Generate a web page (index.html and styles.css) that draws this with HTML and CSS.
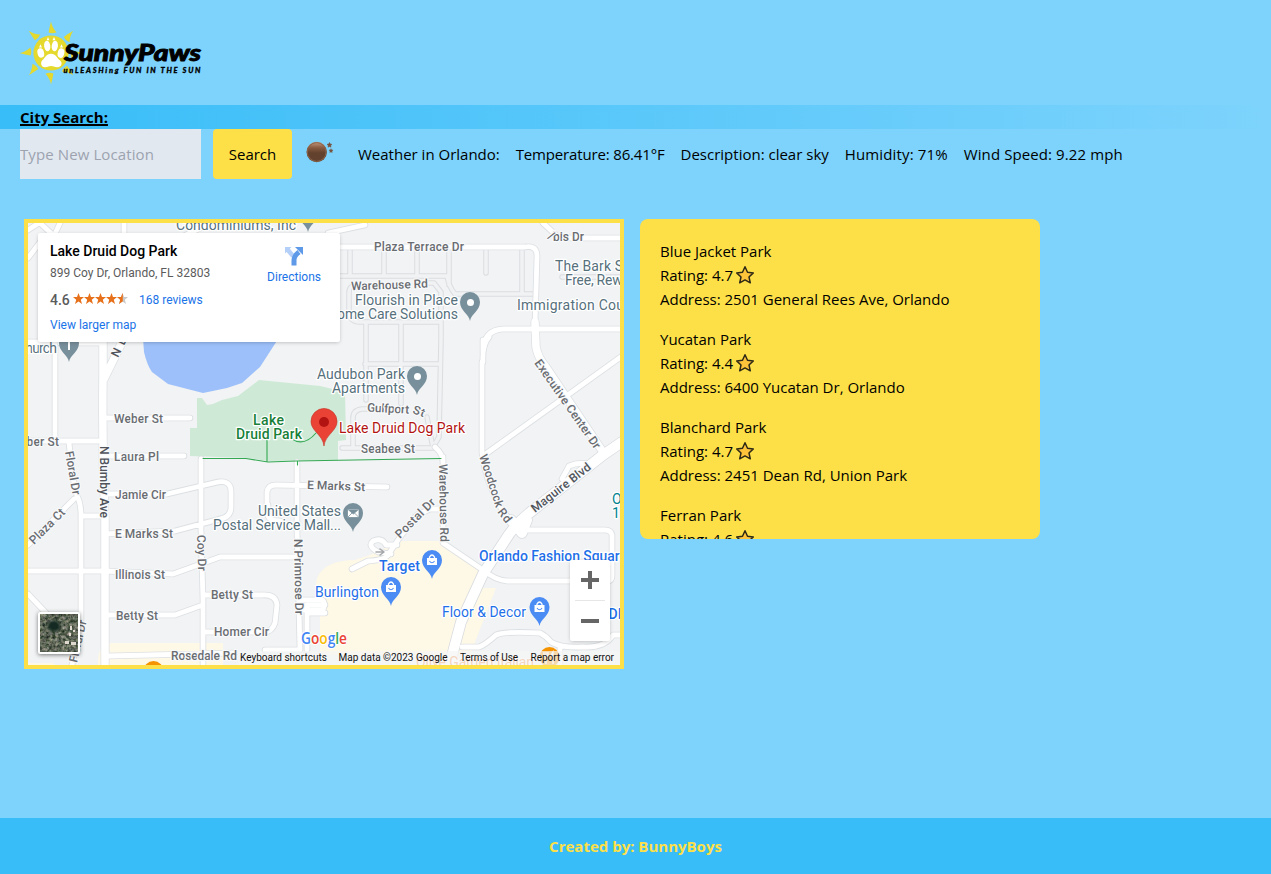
FILE: index.html
```html
<!DOCTYPE html>
<html lang="en">
<head>
<meta charset="utf-8">
<title>SunnyPaws</title>
<link rel="stylesheet" href="styles.css">
</head>
<body>
<header class="header">
  <svg class="logo" viewBox="20 20 190 65" role="img" aria-label="SunnyPaws">
    <g fill="#e4d92c">
      <circle cx="51" cy="53" r="17.6"/>
      <path id="ray" d="M51 21.500Q52 27.500 56.500 32.300Q52.500 34 48.600 32.600Q49.500 27 51 21.500z"/>
      <use href="#ray" transform="rotate(45 51 53)"/>
      <use href="#ray" transform="rotate(90 51 53)"/>
      <use href="#ray" transform="rotate(135 51 53)"/>
      <use href="#ray" transform="rotate(180 51 53)"/>
      <use href="#ray" transform="rotate(225 51 53)"/>
      <use href="#ray" transform="rotate(270 51 53)"/>
      <use href="#ray" transform="rotate(315 51 53)"/>
    </g>
    <g fill="#fff">
      <path d="M51 53.700C46 53.700 45 58 42.500 60C40 62 41 67.500 45 67.300C48 67 49 66 51 66C53 66 54.500 67.200 57.500 67.300C62 67 63 62 59.500 60C57 58 56 53.700 51 53.700z"/>
      <ellipse cx="47.200" cy="46" rx="3.100" ry="5.300" transform="rotate(-6 47 46)"/>
      <ellipse cx="54.800" cy="46" rx="3.100" ry="5.300" transform="rotate(6 55 46)"/>
      <ellipse cx="40.800" cy="53" rx="3.300" ry="4.800" transform="rotate(-14 40.500 53)"/>
      <ellipse cx="61" cy="53" rx="3.300" ry="4.800" transform="rotate(14 60.500 53)"/>
      <path d="M48 37l1.400 3.300h-2.800zM54 37l1.500 3.300h-3zM40.500 44.300l1.500 3.300h-3zM61.500 44.300l1.500 3.300h-3z"/>
    </g>
    <text class="logo-name" x="64" y="61" textLength="137" lengthAdjust="spacingAndGlyphs">SunnyPaws</text>
    <text class="logo-tag" x="63.500" y="73" textLength="137">unLEASHing FUN IN THE SUN</text>
  </svg>
</header>

<div class="search-title"><span>City Search:</span></div>
<section class="search-row">
  <input class="search-input" type="text" placeholder="Type New Location">
  <button class="search-button" type="button">Search</button>
  <svg class="weather-icon" viewBox="0 0 50 50">
    <defs><linearGradient id="dusk" x1="0" y1="0" x2="0" y2="1"><stop offset="0" stop-color="#c49a80"/><stop offset=".3" stop-color="#875a40"/><stop offset=".55" stop-color="#62412d"/><stop offset="1" stop-color="#634430"/></linearGradient></defs>
    <circle cx="21.700" cy="23" r="10.200" fill="url(#dusk)"/>
    <circle cx="21.700" cy="23" r="9.400" fill="none" stroke="#8d634a" stroke-width="1"/>
    <path d="M34.500 13.500l.8 1.600 1.700.2-1.300 1.200.3 1.700-1.500-.8-1.500.8.3-1.700-1.300-1.200 1.700-.2zM36 19.700l.6 1.200 1.400.2-1 1 .2 1.300-1.200-.6-1.200.6.2-1.300-1-1 1.400-.2z" fill="#76523e" stroke="#76523e" stroke-width=".5"/>
  </svg>
  <div class="weather">
    <p>Weather in Orlando:</p><p class="temperature">Temperature: 86.41°F</p><p>Description: clear sky</p><p class="humidity">Humidity: 71%</p><p class="wind">Wind Speed: 9.22 mph</p>
  </div>
</section>

<main class="content">
  <section class="map">
    <svg class="map-canvas" viewBox="28 223 592 442">
      <defs>
        <g id="lanes">
          <path d="M330 276H447Q449 287 455 294H532M350 248V276M384 248V276M417 248V276M449 248V285M486 250V273M522 250V293M363 287Q349 282 349 293V312Q350 322 360 322H441M425 283H434L441 292V340L439 437L433 447M366 322V400M401 322V404M365 364H440M342 448H433L427 417M353 448V418Q353 410 362 409H369M562 277H620"/>
        </g>
        <g id="streets">
          <path d="M55 342V441M60 343H103M28 441H103M105 418H190M105 456H184M69 443L73 478L77 496Q81 503 81 516V620L72 665M28 545L74 499M82 516H104M105 494H167L218 482Q231 480 231 492V507Q231 517 220 519L175 531L105 534M201 459L201 530L203 600V665M28 571H105L173 574L220 557H297M203 595H262Q276 594 277 605L275 623Q272 632 264 632H203M106 615H175L200 606M28 594L48 615M108 656L235 653M267 509V492Q268 485 276 485L387 487M268 505V516Q270 521 280 521M297 466V530L300 650M300 650H265M307 650V605H325M310 613H325M297 462V480M28 230L39 223M40 223L54 236L60 223M28 258L44 237M124 223V240M182 237L210 223M28 342H50"/>
          <path d="M310 247H525Q537 245 537 256L535 325M543 223L557 236Q560 238 568 238H620M483 340V353Q483 330 503 329H620M482 362V400V453Q485 480 502 510L514 525M483 362Q482 345 489 337M487 453L622 356M562 479L569 466Q580 461 592 465M443 457L443 543L483 570Q495 580 507 581H608Q612 581 612 575V535Q611 530 605 530H522M435 447Q443 454 443 462M352 569L368 561Q388 560 390 552L400 537L417 515L430 509L440 509M391 554L378 552Q367 546 373 541Q382 537 386 545L397 545M462 647H479Q485 645 496 635Q504 631 540 633Q546 636 551 642Q560 648 583 647Q605 648 613 635H620M560 647V665M302 600H322Q326 602 323 610H302M328 233L365 225"/>
        </g>
        <g id="avenues">
          <path d="M103 342V375Q102 450 105 520V665M104 379L133 320M535 322L536 347Q538 358 546 367L603 452"/>
        </g>
        <g id="highway"><path d="M622 442L603 455L537 507Q515 523 504 542L483 574L461 622L449 667M511 520L522 533L527 520"/></g>
        <g id="pin"><path d="M0 18C-1 11-10 8-10-1A10 10 0 0 1 10-1C10 8 1 11 0 18z"/></g>
        <g id="bag"><path d="M-5-3H5V4H-5z" fill="#fff"/><path d="M-2.500-3V-4Q0-8 2.500-4V-3" fill="none" stroke="#fff" stroke-width="1.300"/><path d="M-2.500 0Q0 3.500 2.500 0" fill="none" stroke="#4b8bf4" stroke-width="1.100"/></g>
      </defs>
      <rect x="28" y="223" width="592" height="442" fill="#f1f3f4"/>
      <path fill="#9dc0fa" d="M143 338L144 352Q147 365 152 372L168 384L203 393L227 388L242 383L260 367L280 336z"/>
      <path fill="#ceead6" d="M197 398H202L207 405L213 404L222 400L238 396L259 380L320 386L345 392L346 440L338 441V460L268 461L247 458L190 456V428H197z"/>
      <path fill="#fef8e6" d="M400 541H445L480 570V588H496L470 655H320V610Q313 595 317 578Q325 560 355 560L370 555zM98 665Q97 643 113 643H223V665zM28 663H52L56 665H28z"/>
      <g fill="none" stroke-linecap="round" stroke-linejoin="round">
        <use href="#lanes" stroke="#dadde0" stroke-width="5.500"/><use href="#lanes" stroke="#f1f2f4" stroke-width="3.500"/>
        <use href="#streets" stroke="#dde0e3" stroke-width="6.500"/><use href="#avenues" stroke="#dde0e3" stroke-width="9"/><use href="#highway" stroke="#d8dbdf" stroke-width="11.500"/>
        <use href="#streets" stroke="#fff" stroke-width="4.800"/><use href="#avenues" stroke="#fff" stroke-width="7.500"/><use href="#highway" stroke="#fff" stroke-width="10"/>
        <path stroke="#34a853" stroke-width="1.100" d="M203 458.500H246L268 462L296 461L441 458.500M267 462V439M297.500 461V465M292 439Q304 447 316 433"/>
        <path stroke="#a5a8ab" stroke-width="1.500" d="M376 552H384L380 549M384 552L380 555"/>
      </g>

      <g class="road">
        <text x="374" y="250.500" textLength="90">Plaza Terrace Dr</text>
        <text x="351" y="289" textLength="77" transform="rotate(-2 389 286)">Warehouse Rd</text>
        <text x="553" y="241" textLength="31">bis Dr</text><text x="548" y="239" transform="rotate(32 550 237)">/</text>
        <text x="114" y="422.500" textLength="49">Weber St</text>
        <text x="20" y="446" textLength="39">eber St</text>
        <text x="114" y="460.500" textLength="45">Laura Pl</text>
        <text x="115" y="498.500" textLength="51">Jamie Cir</text>
        <text x="115" y="538" textLength="58">E Marks St</text>
        <text x="115" y="578.500" textLength="50">Illinois St</text>
        <text x="211" y="599" textLength="42">Betty St</text>
        <text x="116" y="619.500" textLength="42">Betty St</text>
        <text x="214" y="635.500" textLength="55">Homer Cir</text>
        <text x="171" y="659.500" textLength="66">Rosedale Rd</text>
        <text x="307" y="489" textLength="58" transform="rotate(2 307 489)">E Marks St</text>
        <text x="367" y="411.500" textLength="42" transform="rotate(3 367 412)">Gulfport</text><text x="412" y="413" textLength="12" transform="rotate(20 412 413)">St</text>
        <text x="361" y="452.500" textLength="54">Seabee St</text>
        <text textLength="44" transform="translate(65 452) rotate(80)">Floral Dr</text>
        <text class="major" textLength="72" transform="translate(100 446) rotate(90)">N Bumby Ave</text>
        <text textLength="45" transform="translate(34 545) rotate(-45)">Plaza Ct</text>
        <text textLength="36" transform="translate(197 535) rotate(88)">Coy Dr</text>
        <text textLength="76" transform="translate(294 539) rotate(89)">N Primrose Dr</text>
        <text textLength="43" transform="translate(77 663) rotate(-77)">Floral Dr</text>
        <text class="major" textLength="29" transform="translate(118 358) rotate(-64)">N Bu</text>
        <text textLength="106" transform="translate(534 363) rotate(55)">Executive Center Dr</text>
        <text textLength="55" transform="translate(479 456) rotate(72)">Woodcock</text><text textLength="15" transform="translate(497 512) rotate(52)">Rd</text>
        <text textLength="78" transform="translate(439 464) rotate(89)">Warehouse Rd</text>
        <text textLength="51" transform="translate(400 539) rotate(-45)">Postal Dr</text>
        <text class="major" textLength="72" transform="translate(535 513) rotate(-38)">Maguire Blvd</text>
      </g>
      <g class="place">
        <text x="176" y="230" textLength="120">Condominiums, Inc</text>
        <text x="17" y="353" textLength="40">Church</text>
        <text x="355" y="305" textLength="103">Flourish in Place</text>
        <text x="327" y="319" textLength="131">Home Care Solutions</text>
        <text x="555" y="271" textLength="76">The Bark Sp</text>
        <text x="565" y="285" textLength="65">Free, Rewa</text>
        <text x="517" y="310" textLength="112">Immigration Cour</text>
        <text x="317" y="379" textLength="88">Audubon Park</text>
        <text x="332" y="393" textLength="73">Apartments</text>
        <text x="258" y="516" textLength="83">United States</text>
        <text x="213" y="530" textLength="128">Postal Service Mall...</text>
        <text class="green" x="253" y="425" textLength="31">Lake</text>
        <text class="green" x="236" y="439" textLength="66">Druid Park</text>
        <text class="red" x="339" y="433" textLength="126">Lake Druid Dog Park</text>
        <text class="teal" x="612" y="504">O</text><text class="teal" x="612" y="518">1</text>
        <text class="shop bold" x="479" y="561" textLength="148">Orlando Fashion Square</text>
        <text class="shop bold" x="379" y="570.500" textLength="41">Target</text>
        <text class="shop" x="315" y="597" textLength="64">Burlington</text>
        <text class="shop" x="442" y="617" textLength="84">Floor &amp; Decor</text>
        <text class="shop bold" x="608.500" y="619">DI</text>
        <text class="food" x="416" y="667" textLength="118">Olive Garden Italian</text>
      </g>
      <g fill="#78909c">
        <use href="#pin" x="470" y="303"/><use href="#pin" x="417" y="377"/><use href="#pin" x="353" y="514"/><use href="#pin" x="69" y="344"/><use href="#pin" x="308" y="214"/>
      </g>
      <circle cx="470.500" cy="302.500" r="3.500" fill="#fff"/><circle cx="417.500" cy="376.500" r="3.500" fill="#fff"/>
      <path d="M347.500 509H359V517.500H347.500zM348 509.500L353.300 514L358.500 509.500M348 517L352 513M358.500 517L354.500 513" fill="#fff" stroke="#78909c" stroke-width=".8"/><path d="M69 340V350" stroke="#fff" stroke-width="2"/>
      <g fill="#4b8bf4"><use href="#pin" x="432" y="561"/><use href="#pin" x="391" y="588"/><use href="#pin" x="539.500" y="608"/></g>
      <use href="#bag" x="432" y="561"/><use href="#bag" x="391" y="588"/><use href="#bag" x="539.500" y="608"/>
      <circle cx="153.500" cy="671" r="10" fill="#f59300"/><circle cx="549.500" cy="657" r="10" fill="#f59300"/><path d="M546 652v12M544 652v4h4v-4M553 664v-12q-3 4 0 6" fill="none" stroke="#fff" stroke-width="1.300"/>
      <path d="M324 446C323 435 311 431 311 421.500A13 13 0 0 1 337 421.500C337 431 325 435 324 446z" fill="#ea4335" stroke="#c93a2e" stroke-width=".7"/><circle cx="324" cy="422" r="5" fill="#b31412"/>
      <rect x="238" y="651" width="382" height="14" fill="#f5f5f5" opacity=".7"/>
      <text class="google" x="301" y="644" textLength="46" lengthAdjust="spacingAndGlyphs"><tspan fill="#4285f4">G</tspan><tspan fill="#ea4335">o</tspan><tspan fill="#fbbc04">o</tspan><tspan fill="#4285f4">g</tspan><tspan fill="#34a853">l</tspan><tspan fill="#ea4335">e</tspan></text>
      <g class="legal">
        <text x="240" y="661" textLength="87">Keyboard shortcuts</text><text x="338.500" y="661" textLength="109">Map data ©2023 Google</text><text x="460" y="661" textLength="58">Terms of Use</text><text x="530.500" y="661" textLength="83.500">Report a map error</text>
      </g>
    </svg>

    <div class="place-card">
      <div class="place-info">
        <h2>Lake Druid Dog Park</h2>
        <p class="place-address">899 Coy Dr, Orlando, FL 32803</p>
        <div class="place-rating"><b>4.6</b>
          <svg width="55" height="12" viewBox="0 0 55 12"><defs><path id="star" d="M5.500 0L7 4H11L7.800 6.700L9 11L5.500 8.500L2 11L3.200 6.700L0 4H4z"/><clipPath id="half"><path d="M44 0h5.800v12H44z"/></clipPath></defs><g fill="#e7711b"><use href="#star"/><use href="#star" x="11"/><use href="#star" x="22"/><use href="#star" x="33"/></g><use href="#star" x="44" fill="#c9c9c9"/><g clip-path="url(#half)"><use href="#star" x="44" fill="#e7711b"/></g></svg>
          <a>168 reviews</a></div>
        <a>View larger map</a>
      </div>
      <div class="directions">
        <svg width="20" height="20" viewBox="0 0 20 20"><path d="M3 3L9 10" stroke="#b4d0f8" stroke-width="4.500"/><path d="M1 1h6.500L1 7.500z" fill="#b4d0f8"/><path d="M10 19.500V14Q10 10 15 6" fill="none" stroke="#5e9ae8" stroke-width="5"/><path d="M11 1H19V9z" fill="#5e9ae8"/></svg>
        <a>Directions</a>
      </div>
    </div>

    <div class="satellite">
      <svg viewBox="0 0 38 38">
        <defs>
          <filter id="terrain" x="0" y="0" width="1" height="1" color-interpolation-filters="sRGB"><feTurbulence type="fractalNoise" baseFrequency=".32" numOctaves="3" seed="8"/><feColorMatrix values=".8 0 0 0 -.03 .7 .1 0 0 0 .7 0 .1 0 -.06 0 0 0 0 1"/></filter>
          <radialGradient id="water"><stop offset=".4" stop-color="#142a22"/><stop offset="1" stop-color="#22362a" stop-opacity="0"/></radialGradient>
        </defs>
        <rect width="38" height="38" filter="url(#terrain)"/>
        <ellipse cx="14" cy="12" rx="9" ry="8" fill="url(#water)"/>
        <path d="M25 27h4v3h-4zM31 28h5v3h-5zM30 12h2v4h-2zM29 19h2v3h-2zM33 16h2v2h-2z" fill="#ded8cf"/>
      </svg>
    </div>
    <div class="zoom">
      <span class="zoom-in"></span><span class="zoom-out"></span>
    </div>
  </section>

  <section class="parks">
    <article><p>Blue Jacket Park</p><p>Rating: 4.7<svg class="rate"><use href="#outline-star"/></svg></p><p>Address: 2501 General Rees Ave, Orlando</p></article>
    <article><p>Yucatan Park</p><p>Rating: 4.4<svg class="rate"><use href="#outline-star"/></svg></p><p>Address: 6400 Yucatan Dr, Orlando</p></article>
    <article><p>Blanchard Park</p><p>Rating: 4.7<svg class="rate"><use href="#outline-star"/></svg></p><p>Address: 2451 Dean Rd, Union Park</p></article>
    <article><p>Ferran Park</p><p>Rating: 4.6<svg class="rate"><use href="#outline-star"/></svg></p></article>
  </section>
</main>

<footer class="footer">Created by: BunnyBoys</footer>
<svg class="symbols"><defs><path id="outline-star" d="M10 1.800L12.500 7.300L18.300 7.900L14 12L15.300 17.800L10 14.900L4.700 17.800L6 12L1.700 7.900L7.500 7.300z" fill="#fdc33b" stroke="#2e2a16" stroke-width="1.500" stroke-linejoin="round"/></defs></svg>
</body>
</html>
```
FILE: styles.css
```css
* { box-sizing: border-box; margin: 0; padding: 0; }
body {
  display: flex;
  flex-direction: column;
  width: 100%;
  height: 874px;
  overflow: hidden;
  background: #7dd3fc;
  color: #000;
  font: 15px/24px "Open Sans", sans-serif;
}
.header { height: 105px; padding: 20px; }
.logo { display: block; width: 190px; height: 65px; }
.logo-name { font: italic 900 23px Lato, sans-serif; stroke: #000; stroke-width: .9px; }
.logo-tag { font: italic 900 7.5px Lato, sans-serif; stroke: #000; stroke-width: .3px; }

.search-title {
  height: 24px;
  padding-left: 20px;
  background: linear-gradient(90deg, #38bdf8, #7dd3fc);
  font-weight: 700;
}
.search-title span { text-decoration: underline; text-decoration-thickness: 2px; }
.search-row { display: flex; height: 50px; padding-left: 20px; }
.search-input {
  width: 181px;
  height: 50px;
  margin-right: 12px;
  border: 0;
  background: #e2e8f0;
  font: inherit;
  letter-spacing: .1px;
}
.search-input::placeholder { color: #9ca3af; opacity: 1; }
.search-button {
  width: 79px;
  border: 0;
  border-radius: 4px;
  background: #fde047;
  font: inherit;
}
.weather-icon { width: 50px; height: 50px; margin: 0 13px 0 3px; }
.weather { display: flex; gap: 16px; padding-top: 13px; white-space: nowrap; }
.temperature { letter-spacing: -.16px; }
.humidity { letter-spacing: .14px; }
.wind { letter-spacing: .1px; }

.content { display: flex; gap: 16px; padding: 40px 24px 0; }
.map {
  position: relative;
  width: 600px;
  height: 450px;
  border: 4px solid #fde047;
  font-family: Roboto, sans-serif;
}
.map-canvas { display: block; width: 592px; height: 442px; }
.map-canvas text { paint-order: stroke; stroke-linejoin: round; }
.road { fill: #696c71; font: 500 12px Roboto, sans-serif; stroke: #f8f9fa; stroke-width: 2.500px; }
.road .major { fill: #50545a; }
.place { fill: #56707c; font: 400 14px Roboto, sans-serif; stroke: #fff; stroke-width: 2.500px; }
.place .green { fill: #188038; font-weight: 500; }
.place .red { fill: #b31412; }
.place .teal { fill: #00838f; }
.place .shop { fill: #1f70e8; }
.place .bold { font-weight: 500; }
.place .food { fill: #ee8a3c; }
.google { font: 600 16.5px "Open Sans", sans-serif; stroke: #fff; stroke-width: 2px; }
.legal { fill: #111; font: 10px Roboto, sans-serif; }

.place-card {
  position: absolute;
  top: 10px;
  left: 10px;
  display: flex;
  justify-content: space-between;
  width: 302px;
  height: 109px;
  padding: 9px 19px 0 12px;
  border-radius: 2px;
  background: #fff;
  box-shadow: 0 1px 4px -1px rgba(0, 0, 0, .3);
  font-size: 12px;
  line-height: 16px;
}
.place-card a { color: #1a73e8; }
.place-card h2 { font-size: 14px; font-weight: 500; line-height: 18px; }
.place-address { margin-top: 5px; color: #5b5b5b; }
.place-rating { display: flex; align-items: center; margin: 11px 0 9px; color: #5b5b5b; }
.place-rating b { width: 23px; font-size: 14px; font-weight: 500; }
.place-rating svg { margin: -2px 11px 0 0; }
.directions { display: flex; flex-direction: column; align-items: center; gap: 3px; padding-top: 4px; }

.satellite {
  position: absolute;
  bottom: 11px;
  left: 10px;
  width: 42px;
  height: 42px;
  border: 2px solid #fff;
  border-radius: 2px;
  background: #fff;
  box-shadow: 0 1px 4px rgba(0, 0, 0, .5);
}
.satellite svg { display: block; width: 38px; height: 38px; }
.zoom {
  position: absolute;
  right: 10px;
  bottom: 24px;
  display: grid;
  grid-template-rows: 1fr 1fr;
  width: 40px;
  height: 81px;
  padding: 0 5px;
  border-radius: 2px;
  background: #fff;
  box-shadow: 0 1px 4px -1px rgba(0, 0, 0, .3);
}
.zoom span { background: linear-gradient(#666, #666) center / 18px 4px no-repeat; }
.zoom .zoom-in {
  border-bottom: 1px solid #e6e6e6;
  background: linear-gradient(#666, #666) center / 18px 4px no-repeat, linear-gradient(#666, #666) center / 4px 18px no-repeat;
}

.parks {
  width: 400px;
  height: 320px;
  padding: 20px;
  overflow: hidden;
  border-radius: 8px;
  background: #fde047;
}
.parks article { margin-bottom: 16px; }
.parks p { display: flex; align-items: center; white-space: nowrap; }
.rate { width: 20px; height: 20px; margin-left: 2px; }
.footer {
  height: 56px;
  margin-top: auto;
  padding-top: 16px;
  background: #38bdf8;
  color: #fde047;
  font-weight: 700;
  text-align: center;
}
.symbols { position: absolute; width: 0; height: 0; }
```
